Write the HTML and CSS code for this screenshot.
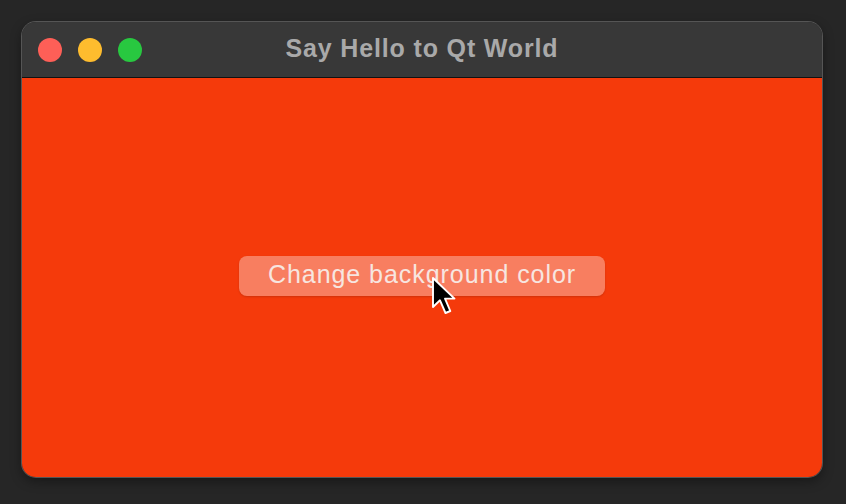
FILE: index.html
```html
<!DOCTYPE html>
<html>
<head>
<meta charset="utf-8">
<link rel="stylesheet" href="styles.css">
</head>
<body>
<div class="desktop">
  <div class="window">
    <div class="titlebar">
      <div class="lights">
        <span class="light red"></span>
        <span class="light yellow"></span>
        <span class="light green"></span>
      </div>
      <div class="title">Say Hello to Qt World</div>
    </div>
    <div class="content">
      <div class="button">Change background color</div>
    </div>
  </div>
  <svg class="cursor" width="27" height="40" viewBox="0 0 27 40">
    <path d="M2 2 L2 31 L9 24.3 L14.5 37 L19.3 35 L14 22.6 L23.5 22.6 Z" fill="#000" stroke="#fff" stroke-width="1.9" stroke-linejoin="round"/>
  </svg>
</div>
</body>
</html>
```
FILE: styles.css
```css
html, body {
  margin: 0;
  padding: 0;
  background: #262626;
}
.desktop {
  position: relative;
  width: 846px;
  height: 504px;
  padding: 22px 0 0 22px;
  box-sizing: border-box;
  background: #262626;
}
.window {
  width: 800px;
  height: 455px;
  border-radius: 14px;
  overflow: hidden;
  display: flex;
  flex-direction: column;
  box-shadow: 0 0 0 1px #555, 0 4px 12px rgba(0,0,0,0.4);
}
.titlebar {
  height: 56px;
  background: #383838;
  border-bottom: 1px solid #111;
  box-sizing: border-box;
  display: flex;
  align-items: center;
  position: relative;
}
.lights {
  display: flex;
  gap: 16px;
  padding-left: 16px;
}
.light {
  width: 24px;
  height: 24px;
  border-radius: 50%;
  display: block;
}
.light.red { background: #fe5f57; }
.light.yellow { background: #febc2e; }
.light.green { background: #28c840; }
.title {
  position: absolute;
  left: 0;
  right: 0;
  top: 0;
  bottom: 0;
  display: flex;
  align-items: center;
  justify-content: center;
  font-family: "Liberation Sans", Arial, sans-serif;
  font-weight: bold;
  font-size: 25px;
  letter-spacing: 0.85px;
  color: #a9a9a9;
  padding-bottom: 3px;
}
.content {
  flex: 1;
  background: #f53a0b;
  display: flex;
  align-items: center;
  justify-content: center;
}
.button {
  width: 366px;
  height: 40px;
  border-radius: 8px;
  background: rgba(255,255,255,0.35);
  box-shadow: 0 1px 2px rgba(0,0,0,0.15);
  display: flex;
  align-items: center;
  justify-content: center;
  font-family: "Liberation Sans", Arial, sans-serif;
  font-size: 25px;
  letter-spacing: 0.95px;
  color: #f7e6e0;
  margin-top: -4px;
  padding-bottom: 3px;
  box-sizing: border-box;
}
.cursor {
  position: absolute;
  left: 431px;
  top: 276px;
}
```
